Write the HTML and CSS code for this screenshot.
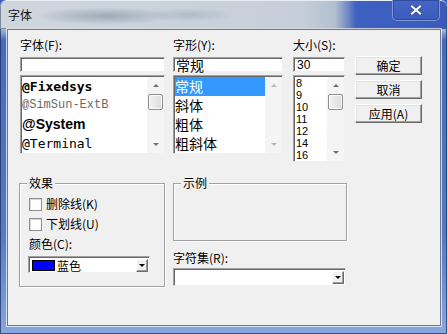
FILE: index.html
```html
<!DOCTYPE html>
<html lang="zh-CN">
<head>
    <meta charset="UTF-8">
    <title>字体</title>
    <link rel="stylesheet" href="styles.css">
</head>
<body>
<div class="window">
    <div class="titlebar">
        <span class="title">字体</span>
        <div class="close">
            <svg width="12" height="10" viewBox="0 0 12 10">
                <path d="M2 1.5 L10 8.5 M10 1.5 L2 8.5" stroke="#2a3f78" stroke-width="3.4" stroke-linecap="square"/>
                <path d="M2 1.5 L10 8.5 M10 1.5 L2 8.5" stroke="#ffffff" stroke-width="2.2" stroke-linecap="square"/>
            </svg>
        </div>
    </div>

    <div class="client">
        <div class="top-row">
            <!-- font family -->
            <div class="col col-font">
                <div class="label">字体(F):</div>
                <div class="field"></div>
                <div class="list list-font">
                    <div class="items">
                        <div class="item f-fixedsys">@Fixedsys</div>
                        <div class="item f-simsun">@SimSun-ExtB</div>
                        <div class="item f-system">@System</div>
                        <div class="item f-terminal">@Terminal</div>
                    </div>
                    <div class="scroll">
                        <div class="arrow"><span class="tri up"></span></div>
                        <div class="track"><div class="thumb"></div></div>
                        <div class="arrow"><span class="tri down"></span></div>
                    </div>
                </div>
            </div>

            <!-- font style -->
            <div class="col col-style">
                <div class="label">字形(Y):</div>
                <div class="field field-style">常规</div>
                <div class="list list-style">
                    <div class="items">
                        <div class="item cn selected">常规</div>
                        <div class="item cn">斜体</div>
                        <div class="item cn">粗体</div>
                        <div class="item cn">粗斜体</div>
                    </div>
                    <div class="scroll disabled">
                        <div class="arrow"><span class="tri up"></span></div>
                        <div class="track"></div>
                        <div class="arrow"><span class="tri down"></span></div>
                    </div>
                </div>
            </div>

            <!-- size -->
            <div class="col col-size">
                <div class="label">大小(S):</div>
                <div class="field field-size">30</div>
                <div class="list list-size">
                    <div class="items">
                        <div class="item num">8</div>
                        <div class="item num">9</div>
                        <div class="item num">10</div>
                        <div class="item num">11</div>
                        <div class="item num">12</div>
                        <div class="item num">14</div>
                        <div class="item num">16</div>
                    </div>
                    <div class="scroll">
                        <div class="arrow"><span class="tri up"></span></div>
                        <div class="track"><div class="thumb"></div></div>
                        <div class="arrow"><span class="tri down"></span></div>
                    </div>
                </div>
            </div>

            <div class="buttons">
                <div class="btn">确定</div>
                <div class="btn">取消</div>
                <div class="btn">应用(A)</div>
            </div>
        </div>

        <div class="bottom-row">
            <div class="group group-effects">
                <span class="group-title">效果</span>
                <div class="check-row"><span class="checkbox"></span>删除线(K)</div>
                <div class="check-row"><span class="checkbox"></span>下划线(U)</div>
                <div class="label label-color">颜色(C):</div>
                <div class="combo combo-color">
                    <span class="swatch"></span>
                    <span class="combo-text">蓝色</span>
                    <span class="drop"><span class="tri down dark"></span></span>
                </div>
            </div>

            <div class="col col-right">
                <div class="group group-sample">
                    <span class="group-title">示例</span>
                </div>
                <div class="label label-charset">字符集(R):</div>
                <div class="combo combo-charset">
                    <span class="combo-text"></span>
                    <span class="drop"><span class="tri down dark"></span></span>
                </div>
            </div>
        </div>
    </div>
</div>
</body>
</html>
```

FILE: styles.css
```css
* {
    margin: 0;
    padding: 0;
    box-sizing: border-box;
}

body {
    font-family: "Noto Sans CJK SC", sans-serif;
    font-size: 12px;
    color: #000;
    background: #3a5bbd;
}

.window {
    width: 447px;
    height: 334px;
    background: linear-gradient(to bottom, #c9d2dc 0, #c9d2dc 26px, #456bbd 40px, #5379c8 70%, #86a7df 100%);
    border-radius: 6px 6px 0 0;
    box-shadow: inset 0 0 0 1px rgba(25, 45, 90, 0.7);
    overflow: hidden;
}

/* title bar */
.titlebar {
    height: 29px;
    display: flex;
    align-items: flex-start;
    border-radius: 6px 6px 0 0;
    background:
        radial-gradient(ellipse 70px 9px at 105px 16px, rgba(120, 135, 155, 0.55), rgba(120, 135, 155, 0)),
        radial-gradient(ellipse 45px 7px at 190px 15px, rgba(130, 145, 165, 0.35), rgba(130, 145, 165, 0)),
        linear-gradient(to right, #cfd6de 0, #c6cfd9 300px, #b3c0d0 335px, #6f88c4 348px, #3e60c0 356px, #3a5bbd 100%);
    box-shadow: inset 0 1px 0 #e8edf3, inset 0 0 0 1px rgba(60, 75, 100, 0.55);
}

.title {
    margin: 8px 0 0 8px;
    line-height: 14px;
    font-size: 12px;
    color: #111;
}

.close {
    margin-left: auto;
    margin-right: 7px;
    width: 48px;
    height: 21px;
    display: flex;
    align-items: center;
    justify-content: center;
    border: 1px solid #7d96d6;
    border-top: none;
    border-radius: 0 0 5px 5px;
    background: linear-gradient(to bottom, #4466c6, #3b5cbd);
    box-shadow: inset 0 0 0 1px #2f4c9e;
}

/* client area */
.client {
    margin: 0 6px 0 7px;
    height: 297px;
    background: #f0f0f0;
    border: 1px solid #6b7a92;
    box-shadow: 0 0 0 1px rgba(255, 255, 255, 0.7);
    padding: 8px 0 0 12px;
}

.top-row {
    display: flex;
    align-items: flex-start;
}

.col {
    display: flex;
    flex-direction: column;
}

.col-font { width: 145px; margin-right: 8px; }
.col-style { width: 110px; margin-right: 10px; }
.col-size { width: 52px; margin-right: 10px; }

.label {
    height: 14px;
    line-height: 14px;
    margin-bottom: 5px;
    white-space: nowrap;
}

.field {
    height: 15px;
    background: #fff;
    border: 1px solid;
    border-color: #a0a0a0 #f0f0f0 #f0f0f0 #a0a0a0;
    box-shadow: inset 1px 1px 0 #696969;
    padding-left: 2px;
    line-height: 13px;
}

.field-style {
    font-size: 14px;
    line-height: 14px;
}

.field-size {
    font-family: "Liberation Sans", sans-serif;
    font-size: 12px;
    line-height: 14px;
    padding-left: 3px;
}

.list {
    margin-top: 3px;
    display: flex;
    background: #fff;
    border: 1px solid;
    border-color: #a0a0a0 #f0f0f0 #f0f0f0 #a0a0a0;
    box-shadow: inset 1px 1px 0 #696969;
    padding: 1px 0 0 1px;
    overflow: hidden;
}

.list-font, .list-style { height: 79px; }
.list-size { height: 87px; }

.items {
    flex: 1;
    overflow: hidden;
}

.item {
    height: 19px;
    line-height: 19px;
    white-space: nowrap;
}

.f-fixedsys {
    font-family: "DejaVu Sans Mono", monospace;
    font-weight: bold;
    font-size: 13px;
}

.f-simsun {
    font-family: "Liberation Mono", monospace;
    font-size: 12px;
    color: #6a6a6a;
}

.f-system {
    font-family: "Liberation Sans", sans-serif;
    font-weight: bold;
    font-size: 14px;
}

.f-terminal {
    font-family: "DejaVu Sans Mono", monospace;
    font-size: 13px;
}

.cn {
    font-size: 14px;
}

.selected {
    background: #3399ff;
    color: #fff;
}

.num {
    height: 12px;
    line-height: 12px;
    font-family: "Liberation Sans", sans-serif;
    font-size: 11px;
    padding-left: 1px;
}

/* scrollbars */
.scroll {
    width: 17px;
    display: flex;
    flex-direction: column;
    background: #f4f4f4;
}

.arrow {
    height: 17px;
    display: flex;
    align-items: center;
    justify-content: center;
}

.track {
    flex: 1;
    padding: 0 1px;
}

.thumb {
    height: 16px;
    border: 1px solid #8f8f8f;
    border-radius: 2px;
    background: linear-gradient(to right, #f2f2f2, #dcdcdc);
    box-shadow: inset 0 0 0 1px #fbfbfb;
}

.tri {
    width: 0;
    height: 0;
    border-left: 3px solid transparent;
    border-right: 3px solid transparent;
}

.tri.up { border-bottom: 3px solid #707070; }
.tri.down { border-top: 3px solid #707070; }
.disabled .tri.up { border-bottom-color: #b5b5b5; }
.disabled .tri.down { border-top-color: #b5b5b5; }

.tri.dark {
    border-left-width: 3px;
    border-right-width: 3px;
    border-top: 3px solid #000;
}

/* buttons */
.buttons {
    display: flex;
    flex-direction: column;
    gap: 5px;
    margin-top: 18px;
}

.btn {
    width: 67px;
    height: 19px;
    display: flex;
    align-items: center;
    justify-content: center;
    font-size: 12px;
    background: #f0f0f0;
    border: 1px solid;
    border-color: #fff #696969 #696969 #fff;
    box-shadow: inset -1px -1px 0 #a0a0a0, inset 1px 1px 0 #e3e3e3;
}

/* lower part */
.bottom-row {
    display: flex;
    align-items: flex-start;
    margin-top: 21px;
    margin-left: -1px;
}

.group {
    position: relative;
    border: 1px solid #a0a0a0;
    box-shadow: 1px 1px 0 #fff, inset 1px 1px 0 #fff;
}

.group-title {
    position: absolute;
    top: -8px;
    left: 7px;
    padding: 0 2px;
    line-height: 14px;
    background: #f0f0f0;
}

.group-effects {
    width: 146px;
    height: 104px;
    margin-right: 8px;
    padding: 13px 0 0 9px;
}

.check-row {
    height: 14px;
    display: flex;
    align-items: center;
    gap: 4px;
    margin-bottom: 6px;
    line-height: 14px;
}

.checkbox {
    width: 13px;
    height: 13px;
    background: #fff;
    border: 1px solid #8f8f8f;
    box-shadow: inset 1px 1px 0 #d8d8d8;
}

.label-color {
    margin-top: 1px;
    margin-bottom: 5px;
}

.combo {
    display: flex;
    align-items: center;
    background: #fff;
    border: 1px solid;
    border-color: #a0a0a0 #f0f0f0 #f0f0f0 #a0a0a0;
    box-shadow: inset 1px 1px 0 #696969;
    padding: 1px 1px 0 3px;
}

.combo-color {
    width: 122px;
    height: 17px;
    margin-left: -1px;
}

.swatch {
    width: 23px;
    height: 11px;
    background: #0000ff;
    border: 1px solid #000;
    margin-right: 2px;
}

.combo-text {
    flex: 1;
    line-height: 13px;
}

.drop {
    width: 12px;
    height: 13px;
    display: flex;
    align-items: center;
    justify-content: center;
    background: #f0f0f0;
    border: 1px solid;
    border-color: #fff #696969 #696969 #fff;
    box-shadow: inset -1px -1px 0 #a0a0a0;
}

.col-right {
    width: 174px;
}

.group-sample {
    height: 58px;
}

.label-charset {
    margin-top: 10px;
    margin-bottom: 3px;
}

.combo-charset {
    width: 173px;
    height: 18px;
}
```
